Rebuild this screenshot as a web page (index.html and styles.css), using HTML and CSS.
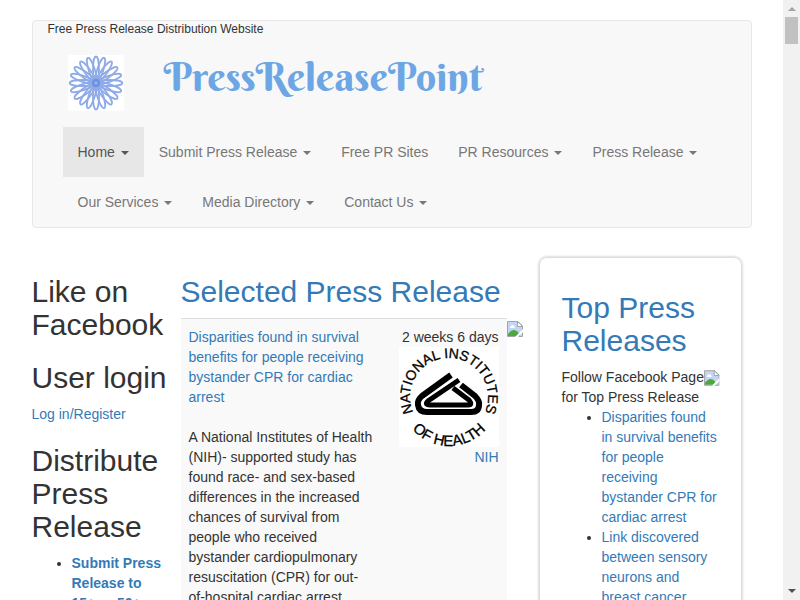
FILE: index.html
```html
<!DOCTYPE html>
<html lang="en">
<head>
    <meta charset="UTF-8">
    <meta name="viewport" content="width=device-width, initial-scale=1.0">
    <title>PressReleasePoint</title>
    <link rel="stylesheet" href="styles.css">
</head>
<body>
    <svg class="defs" width="0" height="0" aria-hidden="true">
        <symbol id="missing" viewBox="0 0 16 16">
            <path d="M.5 .5H11L15.5 5V15.5H.5Z" fill="#c2d5f5" stroke="#a5a5a5"/>
            <path d="M3 7Q3 4 5 4.500Q7 3 8 7Z" fill="#fff"/>
            <path d="M1 15V13Q6 6 11 11L13 15Z" fill="#4fa83d"/>
            <path d="M10.500 .5V5.500H15.500Z" fill="#fff" stroke="#a5a5a5"/>
            <path d="M8 16L16 8V11L11 16Z" fill="#fff"/>
        </symbol>
    </svg>

    <div class="viewport">
        <div class="page">
            <div class="container">
                <header class="navbar">
                    <div class="slogan">Free Press Release Distribution Website</div>
                    <div class="brand">
                        <svg class="logo" viewBox="0 0 56 56" role="img" aria-label="Home">
                            <rect width="56" height="56" fill="#fff"/>
                            <g fill="none" stroke="#8eabe8" stroke-width="1.8">
                                <g id="petals">
                                    <ellipse id="petal" cx="28" cy="14" rx="3" ry="12.500"/>
                                    <use href="#petal" transform="rotate(18 28 28)"/>
                                    <use href="#petal" transform="rotate(36 28 28)"/>
                                    <use href="#petal" transform="rotate(54 28 28)"/>
                                    <use href="#petal" transform="rotate(72 28 28)"/>
                                </g>
                                <use href="#petals" transform="rotate(90 28 28)"/>
                                <use href="#petals" transform="rotate(180 28 28)"/>
                                <use href="#petals" transform="rotate(270 28 28)"/>
                                <circle cx="28" cy="28" r="3" stroke="#6a8fe0"/>
                            </g>
                        </svg>
                        <a class="site-name" href="#">PressReleasePoint</a>
                    </div>
                    <nav>
                        <ul class="menu">
                            <li class="active"><a href="#">Home <span class="caret"></span></a></li>
                            <li><a href="#">Submit Press Release <span class="caret"></span></a></li>
                            <li><a href="#">Free PR Sites</a></li>
                            <li><a href="#">PR Resources <span class="caret"></span></a></li>
                            <li><a href="#">Press Release <span class="caret"></span></a></li>
                            <li><a href="#">Our Services <span class="caret"></span></a></li>
                            <li><a href="#">Media Directory <span class="caret"></span></a></li>
                            <li><a href="#">Contact Us <span class="caret"></span></a></li>
                        </ul>
                    </nav>
                </header>

                <div class="row">
                    <aside class="sidebar">
                        <h2>Like on Facebook</h2>
                        <h2>User login</h2>
                        <a href="#">Log in/Register</a>
                        <h2>Distribute Press Release</h2>
                        <ul>
                            <li><a class="strong" href="#">Submit Press Release to 15+ or 50+</a></li>
                        </ul>
                    </aside>

                    <main class="content">
                        <h2><a href="#">Selected Press Release</a></h2>
                        <div class="releases">
                            <table>
                                <tr>
                                    <td>
                                        <a href="#">Disparities found in survival benefits for people receiving bystander CPR for cardiac arrest</a><br><br>
                                        A National Institutes of Health (NIH)- supported study has found race- and sex-based differences in the increased chances of survival from people who received bystander cardiopulmonary resuscitation (CPR) for out-of-hospital cardiac arrest
                                    </td>
                                    <td class="source">
                                        2 weeks 6 days
                                        <svg class="nih" viewBox="0 0 100 100" role="img" aria-label="NIH logo">
                                            <rect width="100" height="100" fill="#fff"/>
                                            <path id="arc-top" fill="none" d="M50 89A39 39 0 0 1 50 11A39 39 0 0 1 50 89"/>
                                            <path id="arc-bottom" fill="none" d="M1 50A49 49 0 0 0 99 50"/>
                                            <g stroke="#000" stroke-width=".3" text-anchor="middle">
                                                <text font-size="14"><textPath href="#arc-top" startOffset="50%">NATIONAL INSTITUTES</textPath></text>
                                                <text font-size="15"><textPath href="#arc-bottom" startOffset="50%">OF HEALTH</textPath></text>
                                            </g>
                                            <g fill="none" stroke="#000" stroke-width="6">
                                                <path d="M52 28L23 49Q18 53 19 58Q20 65 28 65H72Q80 65 80 58Q81 54 76 49L62 38"/>
                                                <path d="M60 33L29 54Q25 58 31 58H69Q74 58 70 53L54 41" stroke-width="5"/>
                                            </g>
                                        </svg>
                                        <a href="#">NIH</a>
                                    </td>
                                </tr>
                            </table>
                            <svg class="missing" role="img" aria-label="image"><use href="#missing"/></svg>
                        </div>
                    </main>

                    <aside class="card">
                        <h2><a href="#">Top Press Releases</a></h2>
                        <div class="follow">Follow Facebook Page<svg class="missing" role="img" aria-label="image"><use href="#missing"/></svg></div>
                        <div>for Top Press Release</div>
                        <ul>
                            <li><a href="#">Disparities found in survival benefits for people receiving bystander CPR for cardiac arrest</a></li>
                            <li><a href="#">Link discovered between sensory neurons and breast cancer</a></li>
                        </ul>
                    </aside>
                </div>
            </div>
        </div>

        <div class="scrollbar" aria-hidden="true">
            <span class="arrow up"></span>
            <span class="thumb"></span>
            <span class="arrow down"></span>
        </div>
    </div>
</body>
</html>
```
FILE: styles.css
```css
* {
    box-sizing: border-box;
}
body {
    margin: 0;
    font-family: "Liberation Sans", Arial, sans-serif;
    font-size: 14px;
    line-height: 20px;
    color: #333;
    background-color: #fff;
}
a {
    color: #337ab7;
    text-decoration: none;
}
h2 {
    font-size: 30px;
    font-weight: normal;
    line-height: 33px;
    margin: 20px 0 10px;
}
ul {
    margin: 0 0 10px;
    padding-left: 40px;
}
.defs {
    position: absolute;
}
.viewport {
    display: flex;
    height: 100vh;
    overflow: hidden;
}
.page {
    flex: 1;
    min-width: 0;
}
.container {
    max-width: 750px;
    margin: 0 auto;
    padding: 20px 15px;
}

/* header */
.navbar {
    padding: 0 15px;
    border: 1px solid #e7e7e7;
    border-radius: 4px;
    background-color: #f8f8f8;
}
.slogan {
    font-size: 12px;
    line-height: 17px;
}
.brand {
    display: flex;
    align-items: center;
    gap: 40px;
    height: 89px;
    padding: 0 20px;
}
.logo {
    width: 56px;
    height: 56px;
}
.site-name {
    font-family: "Berkshire Swash", "Liberation Serif", serif;
    font-size: 40px;
    line-height: 56px;
    padding-bottom: 12px;
    color: #6ca6e4;
}
.menu {
    display: flex;
    flex-wrap: wrap;
    list-style: none;
    margin: 0;
    padding: 0 15px;
}
.menu a {
    display: block;
    padding: 15px;
    color: #777;
}
.menu .active a {
    color: #555;
    background-color: #e7e7e7;
}
.caret {
    display: inline-block;
    margin-left: 2px;
    vertical-align: middle;
    border-top: 4px solid;
    border-left: 4px solid transparent;
    border-right: 4px solid transparent;
}

/* columns */
.row {
    display: flex;
    align-items: flex-start;
    margin-top: 27px;
    padding-right: 10px;
}
.sidebar {
    width: 136px;
    margin-right: 13px;
}
.content {
    flex: 1;
}
.strong {
    font-weight: bold;
}
.releases {
    display: flex;
    align-items: flex-start;
}
table {
    width: 326px;
    border-collapse: collapse;
    background-color: #f9f9f9;
}
td {
    padding: 8px;
    vertical-align: top;
    border-top: 1px solid #ddd;
}
.source {
    width: 125px;
    text-align: right;
}
.nih {
    display: block;
    width: 100px;
    height: 100px;
    margin-left: auto;
}
.missing {
    width: 16px;
    height: 16px;
    margin-top: 3px;
}
.card {
    width: 203px;
    margin-top: 2px;
    padding: 13px 21px 13px 22px;
    border: 1px solid #ddd;
    border-radius: 8px;
    box-shadow: 0 0 3px #bbb;
}
.follow {
    display: flex;
    white-space: nowrap;
}

/* scrollbar */
.scrollbar {
    display: flex;
    flex-direction: column;
    align-items: center;
    width: 17px;
    padding: 7px 0;
    background-color: #f1f1f1;
}
.thumb {
    width: 13px;
    height: 27px;
    margin-top: 6px;
    background-color: #c1c1c1;
}
.arrow {
    border-left: 4px solid transparent;
    border-right: 4px solid transparent;
}
.up {
    border-bottom: 4px solid #a3a3a3;
}
.down {
    margin-top: auto;
    border-top: 4px solid #505050;
}
```
